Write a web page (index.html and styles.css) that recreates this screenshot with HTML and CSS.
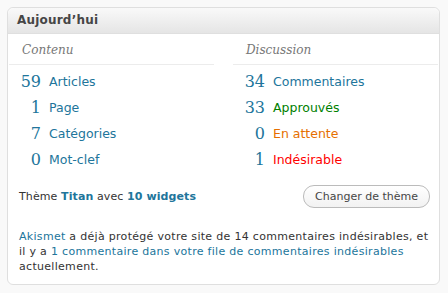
FILE: index.html
```html
<!DOCTYPE html>
<html lang="fr">
<head>
<meta charset="UTF-8">
<title>Tableau de bord</title>
<link rel="stylesheet" href="styles.css">
</head>
<body>

<div class="postbox">
    <h3 class="hndle">Aujourd’hui</h3>
    <div class="inside">
        <div class="tables">
            <div class="table">
                <p class="sub">Contenu</p>
                <table>
                    <tr><td class="b">59</td><td class="t"><a href="#">Articles</a></td></tr>
                    <tr><td class="b">1</td><td class="t"><a href="#">Page</a></td></tr>
                    <tr><td class="b">7</td><td class="t"><a href="#">Catégories</a></td></tr>
                    <tr><td class="b">0</td><td class="t"><a href="#">Mot-clef</a></td></tr>
                </table>
            </div>
            <div class="table">
                <p class="sub">Discussion</p>
                <table>
                    <tr><td class="b">34</td><td class="t"><a href="#">Commentaires</a></td></tr>
                    <tr><td class="b">33</td><td class="t"><a href="#" class="approved">Approuvés</a></td></tr>
                    <tr><td class="b">0</td><td class="t"><a href="#" class="waiting">En attente</a></td></tr>
                    <tr><td class="b">1</td><td class="t"><a href="#" class="spam">Indésirable</a></td></tr>
                </table>
            </div>
        </div>

        <div class="versions">
            <p>Thème <a href="#"><b>Titan</b></a> avec <a href="#"><b>10 widgets</b></a></p>
            <a href="#" class="button">Changer de thème</a>
        </div>

        <p class="akismet"><a href="#">Akismet</a> a déjà protégé votre site de 14 commentaires indésirables, et il y a <a href="#">1 commentaire dans votre file de commentaires indésirables</a> actuellement.</p>
    </div>
</div>

</body>
</html>
```

FILE: styles.css
```css
body {
    margin: 0;
    padding: 7px 8px 0 7px;
    background-color: #f9f9f9;
    font-family: "DejaVu Sans", Verdana, sans-serif;
    font-size: 11px;
    color: #333;
}
a {
    color: #21759b;
    text-decoration: none;
}
.postbox {
    background-color: #fff;
    border: 1px solid #dfdfdf;
    border-radius: 6px;
    height: 276px;
}
.hndle {
    margin: 0;
    height: 25px;
    line-height: 25px;
    padding-left: 9px;
    font-size: 12px;
    letter-spacing: 0.2px;
    color: #464646;
    background: linear-gradient(#f9f9f9, #e5e5e5);
    border-bottom: 1px solid #dfdfdf;
    border-radius: 6px 6px 0 0;
}
.inside {
    padding: 0 1px;
}
.tables {
    display: flex;
    gap: 19px;
}
.table {
    width: 205px;
}
.sub {
    margin: 0;
    height: 30px;
    line-height: 32px;
    padding-left: 13px;
    font-family: "DejaVu Serif", Georgia, serif;
    font-style: italic;
    font-size: 12px;
    color: #777;
    border-bottom: 1px solid #ececec;
}
table {
    border-collapse: collapse;
    margin-top: 3px;
}
td {
    padding: 0;
    height: 26px;
}
td.b {
    width: 21px;
    padding-left: 11px;
    padding-right: 8px;
    text-align: right;
    font-family: "DejaVu Serif", Georgia, serif;
    font-size: 16px;
    color: #21759b;
}
td.t {
    font-size: 12.5px;
}
.approved {
    color: #008000;
}
.waiting {
    color: #e66f00;
}
.spam {
    color: #ff0000;
}
.versions {
    display: flex;
    justify-content: space-between;
    align-items: center;
    padding: 0 8px 0 10px;
    margin-top: 13px;
}
.versions p {
    margin: 0;
    letter-spacing: 0.1px;
}
.button {
    color: #464646;
    border: 1px solid #bbb;
    border-radius: 11px;
    padding: 4px 11px;
    background: linear-gradient(#fff, #f2f2f2);
}
.akismet {
    margin: 21px 4px 0 10px;
    line-height: 15px;
    letter-spacing: 0.3px;
}
```
